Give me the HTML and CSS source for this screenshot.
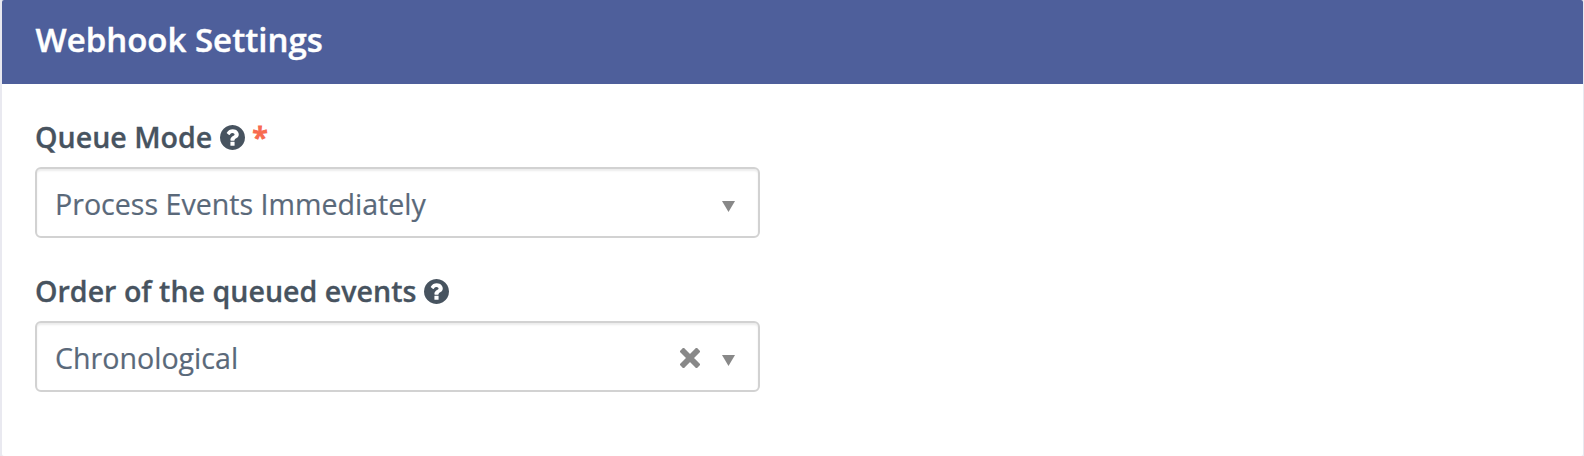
FILE: index.html
```html
<!DOCTYPE html>
<html lang="en">
<head>
<meta charset="utf-8">
<title>Webhook Settings</title>
<link rel="stylesheet" href="styles.css">
</head>
<body>
<section class="panel">
  <header class="panel-heading"><h1 class="panel-title">Webhook Settings</h1></header>
  <div class="panel-body">
    <div class="field">
      <div class="label"><span>Queue Mode</span>
        <svg class="help" viewBox="0 0 1536 1536"><path fill="#47535f" fill-rule="evenodd" d="M896 1248v-192q0-14-9-23t-23-9H672q-14 0-23 9t-9 23v192q0 14 9 23t23 9h192q14 0 23-9t9-23zm256-672q0-88-55.500-163T958 297t-170-41q-243 0-371 213-15 24 8 42l132 100q7 6 19 6 16 0 25-12 53-68 86-92 34-24 86-24 48 0 85.500 26t37.500 59q0 38-20 61t-68 45q-63 28-115.500 86.500T640 892v36q0 14 9 23t23 9h192q14 0 23-9t9-23q0-19 21.500-49.500T972 829q32-18 49-28.500t46-35 44.500-48 28-60.500 12.500-81zm384 192q0 209-103 385.500T1153.500 1433 768 1536t-385.500-103T103 1153.500 0 768t103-385.500T382.500 103 768 0t385.500 103T1433 382.500 1536 768z"/></svg>
        <span class="required">*</span>
      </div>
      <div class="select"><span class="value">Process Events Immediately</span>
        <svg class="arrow" viewBox="0 0 13 11"><path d="M0 0h13L6.500 11z" fill="#888"/></svg>
      </div>
    </div>
    <div class="field">
      <div class="label"><span>Order of the queued events</span>
        <svg class="help" viewBox="0 0 1536 1536"><path fill="#47535f" fill-rule="evenodd" d="M896 1248v-192q0-14-9-23t-23-9H672q-14 0-23 9t-9 23v192q0 14 9 23t23 9h192q14 0 23-9t9-23zm256-672q0-88-55.500-163T958 297t-170-41q-243 0-371 213-15 24 8 42l132 100q7 6 19 6 16 0 25-12 53-68 86-92 34-24 86-24 48 0 85.500 26t37.500 59q0 38-20 61t-68 45q-63 28-115.500 86.500T640 892v36q0 14 9 23t23 9h192q14 0 23-9t9-23q0-19 21.500-49.500T972 829q32-18 49-28.500t46-35 44.500-48 28-60.500 12.500-81zm384 192q0 209-103 385.500T1153.500 1433 768 1536t-385.500-103T103 1153.500 0 768t103-385.500T382.500 103 768 0t385.500 103T1433 382.500 1536 768z"/></svg>
      </div>
      <div class="select"><span class="value">Chronological</span>
        <svg class="clear" viewBox="0 0 20 20"><path d="M3.500 3.500l13 13M16.500 3.500l-13 13" stroke="#888" stroke-width="5.800" stroke-linecap="square"/></svg>
        <svg class="arrow" viewBox="0 0 13 11"><path d="M0 0h13L6.500 11z" fill="#888"/></svg>
      </div>
    </div>
  </div>
</section>
</body>
</html>
```
FILE: styles.css
```css
* { box-sizing: border-box; }
body { margin: 0; background: #e9e9f0; font-family: "Open Sans", sans-serif; overflow: hidden; }
.panel { height: 456px; margin: 0 1px 0 2px; background: #fff; border-radius: 2px; overflow: hidden; }
.panel-heading { height: 84px; padding: 0 33.5px; background: #4e5f9b; }
.panel-title { margin: 0; font-size: 33px; line-height: 79px; font-weight: 600; color: #fff; -webkit-text-stroke: .4px #fff; }
.panel-body { padding: 32px 33px; }
.field { width: 725px; margin-bottom: 32px; }
.label { display: flex; align-items: center; height: 40px; margin-bottom: 11px; font-size: 28.6px; font-weight: 600; color: #47535f; white-space: nowrap; -webkit-text-stroke: .3px; }
.help { width: 25px; height: 25px; margin: 2px 7px 0 8px; }
.required { color: #f86b4f; -webkit-text-stroke: .9px; }
.select { display: flex; align-items: center; height: 71px; padding: 1px 23px 0 18px; border: 2px solid #d2d2d2; border-radius: 6px; box-shadow: inset 0 2px 2px rgba(0,0,0,.075); font-size: 28.6px; color: #5a697a; }
.value { flex: 1; -webkit-text-stroke: .2px; }
.arrow { width: 13px; height: 11px; margin-top: 7px; }
.clear { width: 20px; height: 20px; margin: 1px 22px 0 0; }
```
